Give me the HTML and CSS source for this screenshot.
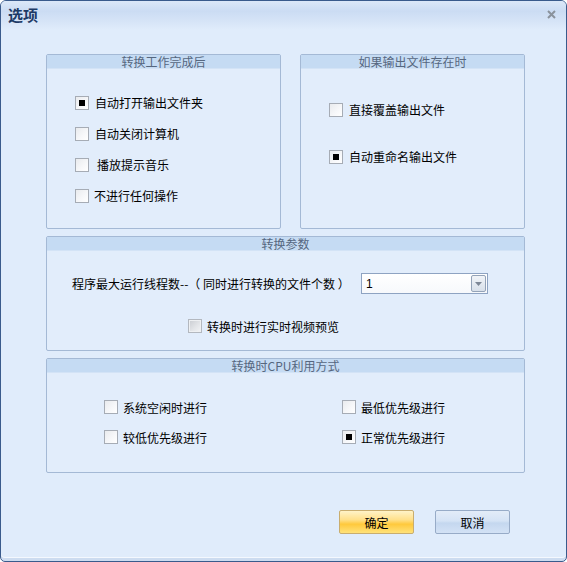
FILE: index.html
```html
<!DOCTYPE html>
<html lang="zh-CN">
<head>
<meta charset="utf-8">
<title>选项</title>
<link rel="stylesheet" href="styles.css">
</head>
<body>
<div class="window">
  <div class="titlebar">
    <span class="title">选项</span>
    <span class="close"><svg width="9" height="9" viewBox="0 0 9 9"><path d="M1 1 L8 8 M8 1 L1 8" stroke="#8a929c" stroke-width="2" fill="none"/></svg></span>
  </div>
  <div class="content">
    <div class="row-top">
      <div class="group g1">
        <div class="ghead">转换工作完成后</div>
        <div class="gbody list1">
          <label class="item"><span class="cb checked"></span><span>自动打开输出文件夹</span></label>
          <label class="item"><span class="cb"></span><span>自动关闭计算机</span></label>
          <label class="item"><span class="cb"></span><span class="ind">播放提示音乐</span></label>
          <label class="item"><span class="cb"></span><span class="tight">不进行任何操作</span></label>
        </div>
      </div>
      <div class="group g2">
        <div class="ghead">如果输出文件存在时</div>
        <div class="gbody list2">
          <label class="item"><span class="cb"></span><span>直接覆盖输出文件</span></label>
          <label class="item"><span class="cb checked"></span><span>自动重命名输出文件</span></label>
        </div>
      </div>
    </div>
    <div class="group g3">
      <div class="ghead">转换参数</div>
      <div class="gbody params">
        <div class="threads">
          <span class="plabel">程序最大运行线程数--（ 同时进行转换的文件个数 ）</span>
          <div class="combo"><span class="cval">1</span><span class="cbtn"><svg width="7" height="4" viewBox="0 0 7 4"><path d="M0 0 H7 L3.5 4 Z" fill="#7d8796"/></svg></span></div>
        </div>
        <label class="item preview"><span class="cb disabled"></span><span>转换时进行实时视频预览</span></label>
      </div>
    </div>
    <div class="group g4">
      <div class="ghead">转换时CPU利用方式</div>
      <div class="gbody cpu">
        <label class="item"><span class="cb"></span><span>系统空闲时进行</span></label>
        <label class="item"><span class="cb"></span><span>最低优先级进行</span></label>
        <label class="item"><span class="cb"></span><span>较低优先级进行</span></label>
        <label class="item"><span class="cb checked"></span><span>正常优先级进行</span></label>
      </div>
    </div>
    <div class="buttons">
      <button class="btn ok">确定</button>
      <button class="btn cancel">取消</button>
    </div>
  </div>
</div>
</body>
</html>
```
FILE: styles.css
```css
* { box-sizing: border-box; }
html, body { margin: 0; padding: 0; background: #ffffff; }
body {
  font-family: "Noto Sans CJK SC", "DejaVu Sans", sans-serif;
  font-size: 12px;
  color: #000;
}
.window {
  width: 567px;
  height: 562px;
  border: 1px solid #3a5b8c;
  border-radius: 6px 6px 5px 5px;
  background: #e0ecfb;
  box-shadow: inset 0 -3px 0 #cddcf0, inset 0 -4px 0 #f4f8fe;
  overflow: hidden;
}
.titlebar {
  height: 29px;
  display: flex;
  align-items: center;
  justify-content: space-between;
  padding: 0 10px 0 7px;
  background: linear-gradient(to bottom, #dce8f8 0%, #cbdcf3 35%, #d6e4f7 70%, #e0ecfb 100%);
}
.title {
  font-size: 15px;
  font-weight: bold;
  color: #1d3a66;
  line-height: 16px;
  margin-top: -2px;
}
.close { display: flex; margin-top: -2px; }
.content {
  padding: 24px 41px 0 45px;
}
.row-top {
  display: flex;
  gap: 19px;
  height: 175px;
}
.group {
  border: 1px solid #a4b9d5;
  border-radius: 2px;
  background: #e2edfb;
  display: flex;
  flex-direction: column;
}
.g1 { width: 235px; }
.g2 { width: 225px; }
.g3 { width: 479px; height: 115px; margin-top: 7px; }
.g4 { width: 479px; height: 115px; margin-top: 7px; }
.ghead {
  height: 14px;
  line-height: 14px;
  text-align: center;
  background: #c5dbf3;
  color: #56677f;
  font-size: 12px;
  border-bottom: 1px solid #d3e3f6;
}
.item {
  display: flex;
  align-items: center;
  gap: 6px;
  white-space: nowrap;
}
.item .ind { margin-left: 2px; }
.item .tight { margin-left: -1px; }
.cb {
  width: 14px;
  height: 14px;
  flex: none;
  border: 1px solid #a6acb5;
  background: linear-gradient(135deg, #e9ebee 0%, #f7f8fa 60%, #ffffff 100%);
  display: flex;
  align-items: center;
  justify-content: center;
}
.cb.checked::after {
  content: "";
  width: 6px;
  height: 6px;
  background: #000;
}
.cb.disabled {
  border-color: #b3b8bf;
  background: linear-gradient(135deg, #c9ccd1 0%, #e2e4e7 55%, #f3f4f6 100%);
  box-shadow: inset 0 0 0 1px #eef0f2;
}
.list1 {
  padding: 18px 0 0 28px;
  display: flex;
  flex-direction: column;
}
.list1 .item { height: 31px; }
.list2 {
  padding: 25px 0 0 28px;
  display: flex;
  flex-direction: column;
  gap: 16px;
}
.list2 .item { height: 31px; }
.params {
  padding: 22px 0 0 25px;
  display: flex;
  flex-direction: column;
}
.threads {
  display: flex;
  align-items: center;
  height: 21px;
}
.plabel { width: 289px; white-space: nowrap; }
.combo {
  width: 127px;
  height: 21px;
  border: 1px solid #8ea3c2;
  background: linear-gradient(to bottom, #ffffff 0%, #f7f9fc 100%);
  display: flex;
  align-items: center;
  justify-content: space-between;
  padding: 0 1px 0 4px;
}
.cval { font-family: "Liberation Sans", Arial, sans-serif; font-size: 12px; }
.cbtn {
  width: 15px;
  height: 17px;
  border: 1px solid #94a3b8;
  border-radius: 2px;
  background: linear-gradient(to bottom, #f1f4f8 0%, #d8e0ea 100%);
  display: flex;
  align-items: center;
  justify-content: center;
}
.preview {
  margin: 24px 0 0 116px;
  height: 16px;
  gap: 5px;
}
.cpu {
  padding: 24px 0 0 57px;
  display: grid;
  grid-template-columns: 238px auto;
  row-gap: 10px;
}
.cpu .item { height: 20px; gap: 5px; }
.buttons {
  display: flex;
  justify-content: flex-end;
  gap: 21px;
  margin-top: 37px;
  padding-right: 15px;
}
.btn {
  width: 75px;
  height: 24px;
  font-family: "Noto Sans CJK SC", sans-serif;
  font-size: 12px;
  color: #000;
  padding: 0;
  border-radius: 2px;
  cursor: pointer;
}
.ok {
  border: 1px solid #c9ad6e;
  background: linear-gradient(to bottom, #fff3c8 0%, #ffe08a 40%, #ffc93c 60%, #ffe27a 100%);
}
.cancel {
  border: 1px solid #97abc7;
  background: linear-gradient(to bottom, #e3ecf8 0%, #d5e3f5 45%, #c4d7ef 55%, #d3e2f5 100%);
}
```
